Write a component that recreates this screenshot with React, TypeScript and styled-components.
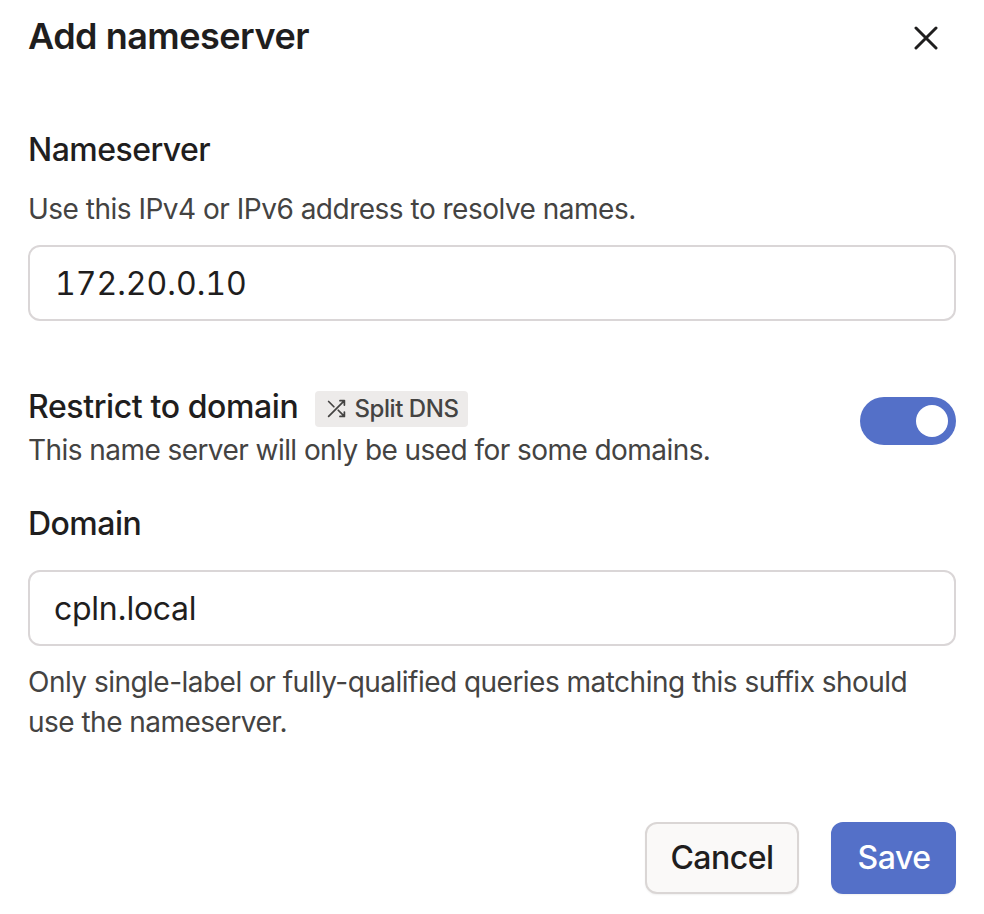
import React from "react";
import styled, { createGlobalStyle } from "styled-components";

const Global = createGlobalStyle`
  * { box-sizing: border-box; }
  body { margin: 0; background: #fff; color: #1f1e1e; font-family: Inter, "Liberation Sans", sans-serif; }
`;
const Dialog = styled.main`
  width: 984px; height: 914px; padding: 13px 28px 20px;
  display: flex; flex-direction: column;
`;
const Header = styled.header`
  display: flex; justify-content: space-between; align-items: flex-start; height: 46px;
`;
const Title = styled.h1`
  margin: 0; font-size: 36px; line-height: 46px; font-weight: 600; letter-spacing: -0.5px;
`;
const CloseButton = styled.button`
  border: 0; background: none; padding: 0; margin: 13px 18px 0 0; display: flex; color: #1f1e1e;
`;
const Field = styled.section<{ $top: number }>`
  margin-top: ${(p) => p.$top}px;
`;
const Label = styled.h2<{ $spacing?: number }>`
  margin: 0; font-size: 32px; line-height: 40px; font-weight: 500; letter-spacing: ${(p) => p.$spacing ?? -0.53}px; white-space: nowrap;
`;
const Hint = styled.p<{ $top?: number; $spacing?: number }>`
  margin: ${(p) => p.$top ?? 0}px 0 0; font-size: 28px; line-height: 40px; letter-spacing: ${(p) => p.$spacing ?? -0.5}px; color: #444342;
`;
const Input = styled.input<{ $top: number; $numeric?: boolean }>`
  display: block; width: 100%; height: 76px; margin-top: ${(p) => p.$top}px;
  padding: 0 ${(p) => (p.$numeric ? 25 : 24)}px; border: 2px solid #dad6d7; border-radius: 12px;
  background: #fff; color: #1f1e1e; font: 400 32px Inter, "Liberation Sans", sans-serif;
  font-variant-numeric: ${(p) => (p.$numeric ? "tabular-nums" : "normal")};
  letter-spacing: ${(p) => (p.$numeric ? 0 : -0.27)}px; outline: 0;
`;
const ToggleRow = styled.section`
  display: flex; justify-content: space-between; align-items: flex-start; margin-top: 66px; height: 85px;
`;
const LabelRow = styled.div`
  display: flex; align-items: flex-start; gap: 17px;
`;
const Badge = styled.span`
  display: flex; align-items: center; gap: 7px; width: 153px; height: 36px; padding: 0 0 1px 11px; margin-top: 4px;
  border-radius: 4px; background: #edebea; color: #444342;
  font-size: 24px; font-weight: 500; letter-spacing: -0.42px; white-space: nowrap;
`;
const Switch = styled.button`
  width: 96px; height: 48px; padding: 8px; margin-top: 10px; border: 0; border-radius: 24px;
  background: #5470c8; display: flex; justify-content: flex-end; flex: none;
`;
const Knob = styled.span`
  width: 32px; height: 32px; border-radius: 50%; background: #fff;
`;
const Footer = styled.footer`
  display: flex; justify-content: flex-end; gap: 32px; margin-top: auto;
`;
const Button = styled.button<{ $primary?: boolean }>`
  width: ${(p) => (p.$primary ? 125 : 154)}px; height: 72px; padding: ${(p) => (p.$primary ? "0 0 2px 1px" : "0 0 2px")}; border-radius: 12px;
  border: 2px solid ${(p) => (p.$primary ? "#5470c8" : "#dad6d5")};
  background: ${(p) => (p.$primary ? "#5470c8" : "#faf9f8")};
  color: ${(p) => (p.$primary ? "#fff" : "#1f1e1e")};
  font: 500 32px Inter, "Liberation Sans", sans-serif; letter-spacing: -0.5px;
  box-shadow: 0 1px 2px rgba(0, 0, 0, 0.06);
`;

const CloseIcon = () => (
  <svg width="24" height="24" viewBox="0 0 24 24" fill="none" stroke="currentColor" strokeWidth="3" strokeLinecap="round">
    <path d="M2 2 22 22M22 2 2 22" />
  </svg>
);
const ShuffleIcon = () => (
  <svg width="21" height="21" viewBox="0 0 24 24" fill="none" stroke="currentColor" strokeWidth="2" strokeLinecap="round" strokeLinejoin="round">
    <path d="M16 3h5v5M3 21 21 3M21 16v5h-5M14 14l7 7M3 4l6 6" />
  </svg>
);

export default function App() {
  return (
    <>
      <Global />
      <Dialog>
        <Header>
          <Title>Add nameserver</Title>
          <CloseButton aria-label="Close"><CloseIcon /></CloseButton>
        </Header>
        <Field $top={71}>
          <Label>Nameserver</Label>
          <Hint $top={19}>Use this IPv4 or IPv6 address to resolve names.</Hint>
          <Input $top={16} $numeric defaultValue="172.20.0.10" />
        </Field>
        <ToggleRow>
          <div>
            <LabelRow>
              <Label $spacing={-0.39}>Restrict to domain</Label>
              <Badge><ShuffleIcon />Split DNS</Badge>
            </LabelRow>
            <Hint $top={3} $spacing={-0.56}>This name server will only be used for some domains.</Hint>
          </div>
          <Switch role="switch" aria-checked="true"><Knob /></Switch>
        </ToggleRow>
        <Field $top={32}>
          <Label>Domain</Label>
          <Input $top={26} defaultValue="cpln.local" />
          <Hint $top={16} $spacing={-0.52}>Only single-label or fully-qualified queries matching this suffix should use the nameserver.</Hint>
        </Field>
        <Footer>
          <Button>Cancel</Button>
          <Button $primary>Save</Button>
        </Footer>
      </Dialog>
    </>
  );
}
